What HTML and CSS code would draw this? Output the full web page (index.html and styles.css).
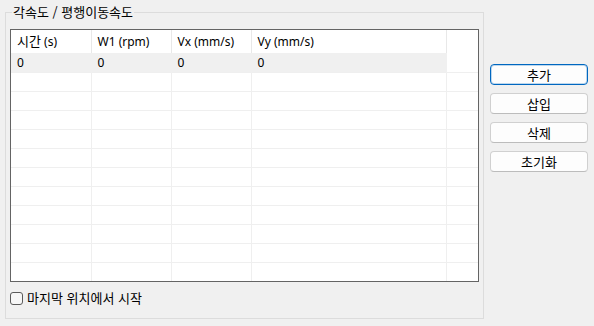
FILE: index.html
```html
<!DOCTYPE html>
<html lang="ko">
<head>
<meta charset="utf-8">
<link rel="stylesheet" href="styles.css">
</head>
<body>
<div class="window">
  <fieldset class="group">
    <legend class="group-title ko">각속도 / 평행이동속도</legend>
    <div class="grid-box">
      <table class="grid">
        <colgroup>
          <col class="c80"><col class="c80"><col class="c80"><col class="c195"><col>
        </colgroup>
        <thead>
          <tr><th><span class="ko">시간</span> (s)</th><th>W1 (rpm)</th><th>Vx (mm/s)</th><th>Vy (mm/s)</th><th class="filler"></th></tr>
        </thead>
        <tbody>
          <tr class="sel"><td>0</td><td>0</td><td>0</td><td>0</td><td class="filler"></td></tr>
          <tr><td></td><td></td><td></td><td></td><td></td></tr>
          <tr><td></td><td></td><td></td><td></td><td></td></tr>
          <tr><td></td><td></td><td></td><td></td><td></td></tr>
          <tr><td></td><td></td><td></td><td></td><td></td></tr>
          <tr><td></td><td></td><td></td><td></td><td></td></tr>
          <tr><td></td><td></td><td></td><td></td><td></td></tr>
          <tr><td></td><td></td><td></td><td></td><td></td></tr>
          <tr><td></td><td></td><td></td><td></td><td></td></tr>
          <tr><td></td><td></td><td></td><td></td><td></td></tr>
          <tr><td></td><td></td><td></td><td></td><td></td></tr>
          <tr><td></td><td></td><td></td><td></td><td></td></tr>
        </tbody>
      </table>
    </div>
    <label class="check-row"><input type="checkbox" class="check"><span class="ko">마지막 위치에서 시작</span></label>
  </fieldset>
  <div class="buttons">
    <button class="btn btn-default ko">추가</button>
    <button class="btn ko">삽입</button>
    <button class="btn ko">삭제</button>
    <button class="btn ko">초기화</button>
  </div>
</div>
</body>
</html>
```
FILE: styles.css
```css
* { box-sizing: border-box; }
html, body {
  margin: 0;
  background: #f0f0f0;
  font-family: "Noto Sans", "Noto Sans CJK KR", sans-serif;
  font-size: 12px;
  color: #000;
}
.ko {
  font-family: "Noto Sans CJK KR", sans-serif;
  font-size: 13px;
}
.window {
  display: flex;
  align-items: flex-start;
  padding-left: 5px;
  width: 594px;
  height: 326px;
}
.group {
  margin: 4px 0 0 0;
  width: 479px;
  min-width: 0;
  border: 1px solid #dcdcdc;
  padding: 9px 4px 12px 4px;
}
.group-title {
  margin-left: 2px;
  padding: 0 1px;
  line-height: 16px;
}
.grid-box {
  width: 469px;
  height: 253px;
  border: 1px solid #646464;
  background: #fff;
  overflow: hidden;
}
.grid {
  border-collapse: collapse;
  table-layout: fixed;
  width: 467px;
}
.c80 { width: 80px; }
.c195 { width: 195px; }
.grid th {
  height: 23px;
  padding: 0 0 0 6px;
  text-align: left;
  font-weight: normal;
  white-space: nowrap;
  border-right: 1px solid #e8e8e8;
  vertical-align: middle;
}
.grid th .ko { line-height: 12px; }
.grid th.filler { border-right: none; }
.grid td {
  height: 19px;
  padding: 0 0 0 6px;
  border-right: 1px solid #efefef;
  border-top: 1px solid #efefef;
  white-space: nowrap;
  vertical-align: middle;
}
.grid td:last-child { border-right: none; }
.grid tr.sel td {
  background: #f0f0f0;
  border-top: none;
  border-right-color: #f0f0f0;
}
.grid tr.sel td.filler {
  background: #fff;
}
.check-row {
  display: flex;
  align-items: center;
  margin-top: 8px;
  height: 16px;
  line-height: 16px;
}
.check {
  appearance: none;
  -webkit-appearance: none;
  width: 13px;
  height: 13px;
  margin: 0 4px 0 0;
  border: 1px solid #5a5a5a;
  border-radius: 3px;
  background: #f6f6f6;
}
.buttons {
  display: flex;
  flex-direction: column;
  gap: 8px;
  margin-left: 6px;
  padding-top: 64px;
}
.btn {
  width: 98px;
  height: 21px;
  padding: 0;
  line-height: 19px;
  color: #000;
  background: #fdfdfd;
  border: 1px solid #d0d0d0;
  border-bottom-color: #bcbcbc;
  border-radius: 4px;
}
.btn-default {
  border: 1px solid #0067c0;
  box-shadow: inset 0 0 0 1px rgba(0, 103, 192, 0.25);
}
```
